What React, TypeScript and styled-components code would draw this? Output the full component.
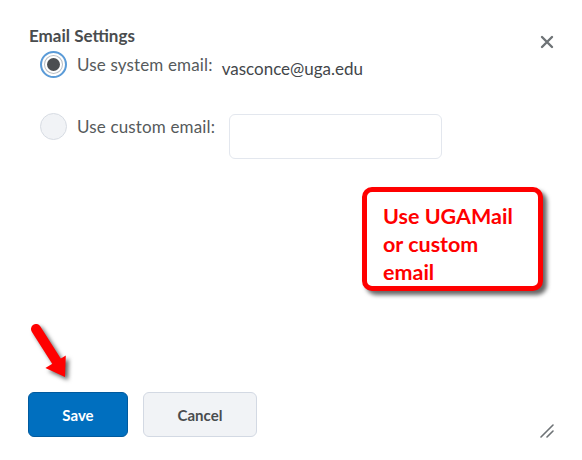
import React from "react";
import styled, { createGlobalStyle } from "styled-components";

const Global = createGlobalStyle`
  html, body { margin: 0; padding: 0; background: #ffffff; }
  body { font-family: Lato, "Open Sans", Arial, sans-serif; }
  * { box-sizing: border-box; }
`;

const Dialog = styled.div`
  position: relative;
  width: 582px;
  height: 460px;
  padding: 26px 29px 23px 29px;
  display: flex;
  flex-direction: column;
  background: #fff;
  overflow: hidden;
`;

const Header = styled.div`
  display: flex;
  justify-content: space-between;
  align-items: flex-start;
`;

const Title = styled.h1`
  margin: 0;
  font-size: 17px;
  line-height: 20px;
  font-weight: 700;
  color: #494c4e;
`;

const CloseButton = styled.button`
  border: none;
  background: none;
  padding: 0;
  margin: 9px -1px 0 0;
  width: 14px;
  height: 14px;
  display: flex;
  cursor: pointer;
`;

const Row = styled.div<{ $top: number }>`
  display: flex;
  align-items: flex-start;
  margin-top: ${(p) => p.$top}px;
  margin-left: 11px;
`;

const Radio = styled.span<{ $checked?: boolean }>`
  flex: none;
  width: 27px;
  height: 27px;
  border-radius: 50%;
  display: flex;
  align-items: center;
  justify-content: center;
  background: ${(p) => (p.$checked ? "#ffffff" : "#f1f3f6")};
  border: ${(p) => (p.$checked ? "2px solid #5a9bd8" : "1px solid #d7dce3")};
  box-shadow: ${(p) => (p.$checked ? "inset 0 0 0 2px #fff, inset 0 0 0 3px #b9bec4" : "none")};
`;

const Dot = styled.span`
  width: 13px;
  height: 13px;
  border-radius: 50%;
  background: #4b4e51;
`;

const Label = styled.span`
  margin-left: 10px;
  font-size: 17px;
  line-height: 27px;
  letter-spacing: 0.15px;
  color: #565a5c;
  white-space: nowrap;
`;

const Value = styled.span`
  margin-left: 9px;
  padding-top: 4px;
  font-size: 17px;
  line-height: 27px;
  color: #43464a;
  white-space: nowrap;
`;

const TextInput = styled.input`
  margin-left: 14px;
  margin-top: 1px;
  width: 213px;
  height: 45px;
  border: 1px solid #e3e7ee;
  border-radius: 6px;
  background: #fff;
  outline: none;
`;

const Callout = styled.div`
  margin-top: 28px;
  margin-left: 333px;
  width: 181px;
  height: 104px;
  border: 5px solid #ff0000;
  border-radius: 10px;
  background: #fff;
  box-shadow: 4px 4px 4px rgba(0, 0, 0, 0.6);
  padding: 10px 0 0 16px;
  color: #ff0000;
  font-size: 21.5px;
  font-weight: 700;
  line-height: 28px;
`;

const Footer = styled.div`
  margin-top: auto;
  display: flex;
  gap: 15px;
  margin-left: -1px;
`;

const Button = styled.button<{ $primary?: boolean }>`
  height: 45px;
  width: ${(p) => (p.$primary ? 100 : 114)}px;
  border-radius: 6px;
  font-family: Lato, "Open Sans", Arial, sans-serif;
  font-size: 15px;
  font-weight: 700;
  cursor: pointer;
  background: ${(p) => (p.$primary ? "#006fbf" : "#f1f3f6")};
  color: ${(p) => (p.$primary ? "#ffffff" : "#494c4e")};
  border: 1px solid ${(p) => (p.$primary ? "#005a9e" : "#d3d9e3")};
`;

const Arrow = styled.svg`
  position: absolute;
  left: 20px;
  top: 315px;
  filter: drop-shadow(3px 3px 2px rgba(0, 0, 0, 0.6));
`;

const Grip = styled.svg`
  position: absolute;
  right: 28px;
  bottom: 22px;
`;

export default function App() {
  return (
    <>
      <Global />
      <Dialog>
        <Header>
          <Title>Email Settings</Title>
          <CloseButton aria-label="Close">
            <svg width="14" height="14" viewBox="0 0 14 14">
              <path d="M2 2 L12 12 M12 2 L2 12" stroke="#6e7376" strokeWidth="2.4" strokeLinecap="round" />
            </svg>
          </CloseButton>
        </Header>
        <Row $top={2}>
          <Radio $checked>
            <Dot />
          </Radio>
          <Label>Use system email:</Label>
          <Value>vasconce@uga.edu</Value>
        </Row>
        <Row $top={31}>
          <Radio />
          <Label>Use custom email:</Label>
          <TextInput type="text" />
        </Row>
        <Callout>
          Use UGAMail
          <br />
          or custom
          <br />
          email
        </Callout>
        <Footer>
          <Button $primary>Save</Button>
          <Button>Cancel</Button>
        </Footer>
        <Arrow width="70" height="75" viewBox="0 0 70 75">
          <line x1="16" y1="14" x2="37" y2="47" stroke="#ff0000" strokeWidth="10" strokeLinecap="round" />
          <polygon points="25.4,52.9 45.8,40.5 45,62" fill="#ff0000" />
        </Arrow>
        <Grip width="14" height="14" viewBox="0 0 14 14">
          <path d="M1 13 L13 1 M7 13 L13 7" stroke="#6e7376" strokeWidth="1.6" strokeLinecap="round" />
        </Grip>
      </Dialog>
    </>
  );
}
